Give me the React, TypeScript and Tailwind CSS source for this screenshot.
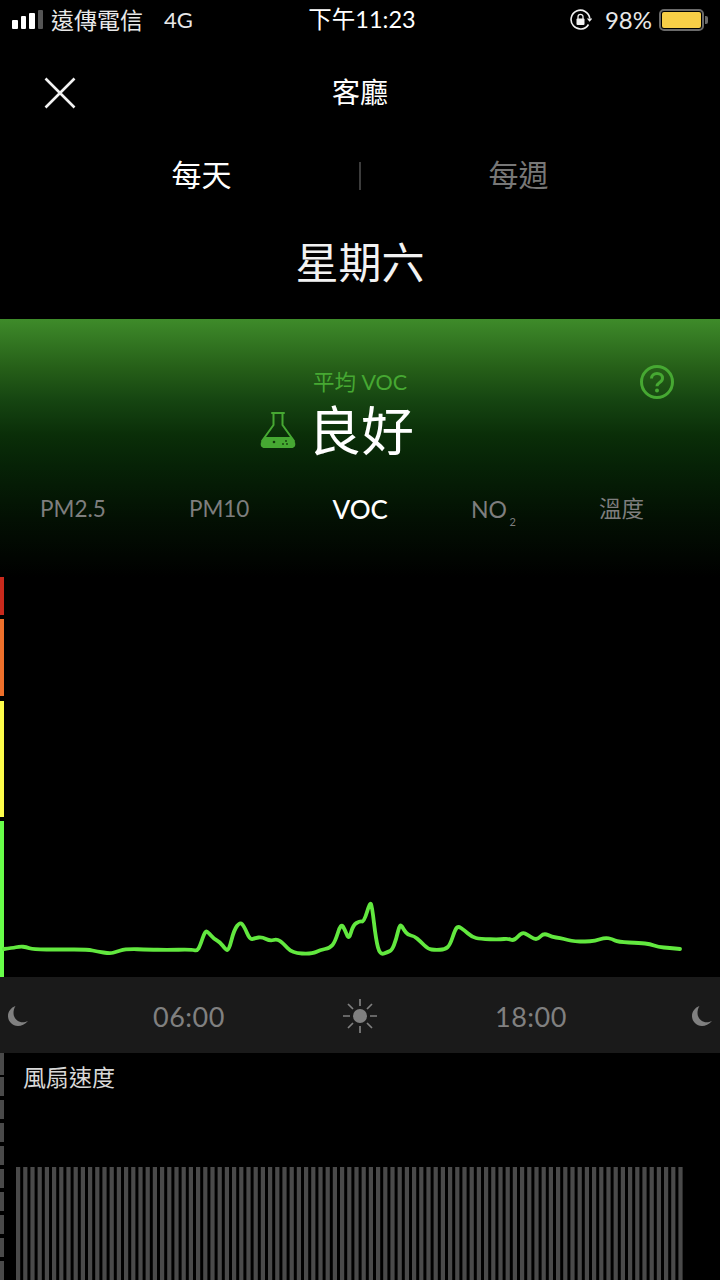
const cjk = "font-['Lato','Noto_Sans_CJK_TC',sans-serif]";

const curve: [number, number][] = [
  [4, 949], [12, 948], [20, 946.5], [26, 947], [33, 949.5], [60, 949.5], [88, 949.5], [97, 951.5], [110, 953.5], [116, 952],
  [125, 949], [150, 949.5], [165, 950], [192, 949.5], [197, 951], [200, 946], [205, 931], [208, 932], [214, 939], [220, 942],
  [226, 950], [229, 950], [234, 930], [240, 922], [244, 926], [250, 940], [255, 938], [262, 937], [270, 941], [277, 939],
  [283, 943], [292, 953], [312, 954], [320, 950], [330, 948], [335, 942], [341, 923], [345, 930], [349, 940], [353, 925],
  [360, 921], [364, 922], [370, 902], [372, 906], [376, 940], [380, 955], [388, 952], [392, 950], [396, 940], [400, 923],
  [404, 930], [408, 935], [414, 936], [420, 941], [428, 949], [435, 950], [445, 949.5], [450, 945], [455, 930], [458, 926],
  [464, 930], [472, 937], [480, 939], [500, 939.5], [508, 938.5], [514, 941], [522, 932], [528, 935], [534, 939], [538, 939],
  [544, 933], [552, 937], [560, 938], [568, 940], [575, 941.5], [585, 941.5], [595, 941], [605, 937.5], [612, 939], [618, 942],
  [640, 943], [650, 944], [658, 947], [670, 948], [680, 949],
];

// smooth the samples by curving through the midpoints
const curvePath = (top: number) => {
  let d = `M${curve[0][0]} ${curve[0][1] - top}`;
  for (let i = 1; i < curve.length - 1; i++) {
    const [x, y] = curve[i];
    const [nx, ny] = curve[i + 1];
    d += ` Q${x} ${y - top} ${(x + nx) / 2} ${(y + ny - 2 * top) / 2}`;
  }
  const last = curve[curve.length - 1];
  return d + ` L${last[0]} ${last[1] - top}`;
};

const StatusBar = () => (
  <div className={`h-10 flex items-center justify-between pl-3 pr-[12px] text-[#e8e8e8] ${cjk}`}>
    <div className="w-[254px] flex items-center">
      <div className="flex items-end gap-[3px] h-[20px] pb-[1px]">
        <div className="w-[5.500px] h-[9px] rounded-[1px] bg-white" />
        <div className="w-[5.500px] h-[13px] rounded-[1px] bg-white" />
        <div className="w-[5.500px] h-[16px] rounded-[1px] bg-white" />
        <div className="w-[5.500px] h-[19px] rounded-[1px] bg-[#555]" />
      </div>
      <span className="ml-[8px] text-[23px] leading-none">遠傳電信</span>
      <span className="ml-[21px] text-[22px] leading-none">4G</span>
    </div>
    <span className="text-[23.500px] leading-none text-white">下午11:23</span>
    <div className="w-[250px] flex items-center justify-end">
      <svg width="22" height="22" viewBox="0 0 22 22" fill="none" className="-ml-[1px]">
        <path d="M18.500 15.500A9.400 9.400 0 1 1 19.800 9.500" stroke="#f2f2f2" strokeWidth="1.600" />
        <path d="M16.800 9.600h5.600l-2.800 3.200z" fill="#f2f2f2" />
        <rect x="6.500" y="9.500" width="8" height="6.500" rx="1" fill="#f2f2f2" />
        <path d="M8 10V7.800a2.500 2.500 0 0 1 5 0V10" stroke="#f2f2f2" strokeWidth="1.300" />
      </svg>
      <span className="ml-[13px] text-[24px] leading-none">98%</span>
      <div className="ml-[7px] flex items-center">
        <div className="w-[45px] h-[22px] rounded-[5px] border-2 border-[#6a6a6a] p-[1px]">
          <div className="w-full h-full rounded-[2px] bg-[#f8cf47]" />
        </div>
        <div className="ml-[1px] w-[3px] h-[8px] rounded-r-[2px] bg-[#6a6a6a]" />
      </div>
    </div>
  </div>
);

const Flask = () => (
  <svg width="38" height="40" viewBox="0 0 38 40" fill="none">
    <path d="M13 3h12M14.500 3v12L3 31M23.500 3v12L35 31" stroke="#46a832" strokeWidth="2" strokeLinecap="round" />
    <path d="M6 27h26l4 5.500c1 3-0.500 5.500-3.500 5.500h-27c-3 0-4.500-2.500-3.500-5.500z" fill="#46a832" />
    <circle cx="15" cy="32" r="1.300" fill="#123d0c" />
    <circle cx="24" cy="34" r="0.900" fill="#123d0c" />
    <circle cx="27" cy="31" r="0.900" fill="#123d0c" />
    <circle cx="28" cy="34" r="0.900" fill="#123d0c" />
  </svg>
);

const Moon = () => (
  <svg width="22" height="22" viewBox="0 0 22 22">
    <path d="M8.500 1C4 2.500 1 6.500 1 11c0 5.500 4.500 10 10 10 3.500 0 6.800-1.700 10-5-1.800 1-3.800 1.300-5.300 1.300C10.500 17.300 6.500 13 6.500 8c0-2.500.7-5 2-7z" fill="#808080" />
  </svg>
);

const Sun = () => (
  <svg width="36" height="36" viewBox="0 0 36 36" fill="none">
    <circle cx="18" cy="18" r="7" fill="#808080" />
    <path d="M18 1v7M18 28v7M1 18h7M28 18h7M6 6l5 5M25 25l5 5M30 6l-5 5M11 25l-5 5" stroke="#808080" strokeWidth="1.700" />
  </svg>
);

const tabs = ["PM2.5", "PM10", "VOC", "NO", "溫度"];

export default function App() {
  return (
    <div className={`relative w-[720px] h-[1280px] overflow-hidden bg-black ${cjk}`}>
      <StatusBar />

      <div className="h-[72px] relative flex items-center justify-center">
        <svg className="absolute left-[44px] top-[37px]" width="32" height="32" viewBox="0 0 32 32" fill="none">
          <path d="M1.500 1.500l29 29M30.500 1.500l-29 29" stroke="#f2f2f2" strokeWidth="2.600" />
        </svg>
        <span className="text-[28px] leading-none text-white mt-[32px]">客廳</span>
      </div>

      <div className="mt-[45px] h-[34px] px-[44px] flex items-center">
        <div className="w-[315px] text-center text-[30px] leading-none text-white">每天</div>
        <div className="w-[2px] h-[28px] mt-[4px] bg-[#3c3c3c]" />
        <div className="w-[315px] text-center text-[30px] leading-none text-[#777]">每週</div>
      </div>

      <div className="mt-[50px] h-[44px] text-center text-[43px] leading-[44px] text-[#f2f2f2]">星期六</div>

      <div className="relative mt-[34px] h-[258px] bg-[linear-gradient(to_bottom,#3e8b2a_0%,#265f18_19%,#154411_32%,#0a2e08_45%,#062206_57%,#031003_77%,#000000_100%)]">
        <div className="pt-[49px] text-center text-[21.500px] leading-[28px] text-[#46a832]">平均 VOC</div>
        <svg className="absolute left-[639px] top-[45px]" width="36" height="36" viewBox="0 0 36 36" fill="none">
          <circle cx="18" cy="18" r="15.500" stroke="#46a832" strokeWidth="3" />
          <path d="M12.500 14.500c0-3.200 2.400-5 5.500-5s5.500 1.800 5.500 4.800c0 4.400-5.500 4-5.500 8" stroke="#46a832" strokeWidth="3" />
          <circle cx="18" cy="26.500" r="2" fill="#46a832" />
        </svg>
        <div className="flex items-center h-[56px] mt-[6px] pl-[259px]">
          <Flask />
          <span className="ml-[11px] text-[53px] leading-none text-white">良好</span>
        </div>
        <div className="mt-[35px] h-[32px] pl-[40px] pr-[76px] flex items-center justify-between">
          {tabs.map((tab) => (
            <span key={tab} className={tab === "VOC" ? "text-[26px] leading-none font-medium text-white" : tab === "NO" ? "relative pr-[9px] text-[23px] leading-none text-[#7e7e7e]" : "text-[22.500px] leading-none text-[#7e7e7e]"}>
              {tab}
              {tab === "NO" && <span className="absolute right-0 top-[18px] text-[11px] leading-none">2</span>}
            </span>
          ))}
        </div>
      </div>

      <div className="relative h-[400px]">
        <div className="w-[4px] h-[400px] flex flex-col">
          <div className="h-[38px] bg-[#c9291c]" />
          <div className="mt-[4px] h-[77px] bg-[#ee702b]" />
          <div className="mt-[5px] h-[116px] bg-[#fdfd4a]" />
          <div className="mt-[4px] h-[156px] bg-[#68ff4a]" />
        </div>
        <svg className="absolute left-0 top-0" width="720" height="400" viewBox="0 0 720 400" fill="none">
          <path d={curvePath(577)} stroke="#62e83f" strokeWidth="3.800" strokeLinecap="round" strokeLinejoin="round" />
        </svg>
      </div>

      <div className="relative h-[76px] pt-[2px] bg-[#1a1a1a] flex items-center pl-[7px] pr-[7px] justify-between">
        <Moon />
        <span className="absolute left-[189px] -translate-x-1/2 text-[27px] leading-none tracking-[0.5px] text-[#808080]">06:00</span>
        <Sun />
        <span className="absolute left-[531px] -translate-x-1/2 text-[27px] leading-none tracking-[0.5px] text-[#808080]">18:00</span>
        <Moon />
      </div>

      <div className="relative h-[227px] overflow-hidden">
        <div className="absolute left-0 top-0 w-[4px] flex flex-col gap-[4px]">
          <div className="h-[22px] -mb-[2px] bg-[#4a4a4a]" />
          {Array.from({ length: 9 }, (_, i) => (
            <div key={i} className="h-[19px] bg-[#4a4a4a]" />
          ))}
        </div>
        <div className="pl-[23px] pt-[9px] text-[23px] leading-[30px] text-[#d8d8d8]">風扇速度</div>
        <svg className="mt-[75px] block" width="720" height="113" viewBox="0 0 720 113">
          {Array.from({ length: 93 }, (_, i) => (
            <rect key={i} x={16 + i * 7.2} y="0" width="4.200" height="113" fill="#4a4a4a" />
          ))}
        </svg>
      </div>
    </div>
  );
}
